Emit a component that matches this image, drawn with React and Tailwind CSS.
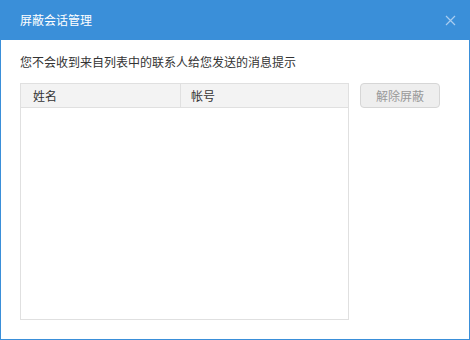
export default function App() {
  const font = { fontFamily: '"Noto Sans CJK SC", "Liberation Sans", sans-serif' };
  return (
    <div className="w-[470px] h-[340px] flex flex-col border border-[#3a8fd9] bg-white text-[12px] text-[#333]" style={font}>
      <div className="h-[40px] -mx-px -mt-px bg-[#3a8fd9] flex items-center justify-between pl-[20px] pr-[14px] shrink-0">
        <span className="text-white text-[12px] leading-none">屏蔽会话管理</span>
        <svg width="11" height="11" viewBox="0 0 11 11" className="text-[#a9cdf0]">
          <path d="M1 1L10 10M10 1L1 10" stroke="currentColor" strokeWidth="1.2" />
        </svg>
      </div>
      <div className="flex-1 flex flex-col pl-[19px] pr-[29px] pb-[19px]">
        <div className="h-[43px] flex items-center leading-none">您不会收到来自列表中的联系人给您发送的消息提示</div>
        <div className="flex-1 flex gap-[11px]">
          <div className="w-[330px] border border-[#e0e0e0] flex flex-col">
            <div className="h-[24px] bg-[#f3f3f3] border-b border-[#e0e0e0] flex">
              <div className="w-[160px] border-r border-[#e0e0e0] pl-[12px] flex items-center">姓名</div>
              <div className="flex-1 pl-[10px] flex items-center">帐号</div>
            </div>
            <div className="flex-1" />
          </div>
          <div>
            <button className="w-[80px] h-[25px] rounded-[4px] border border-[#d6d6d6] bg-[#eeeeee] text-[#999] text-[12px]" style={font}>解除屏蔽</button>
          </div>
        </div>
      </div>
    </div>
  );
}
